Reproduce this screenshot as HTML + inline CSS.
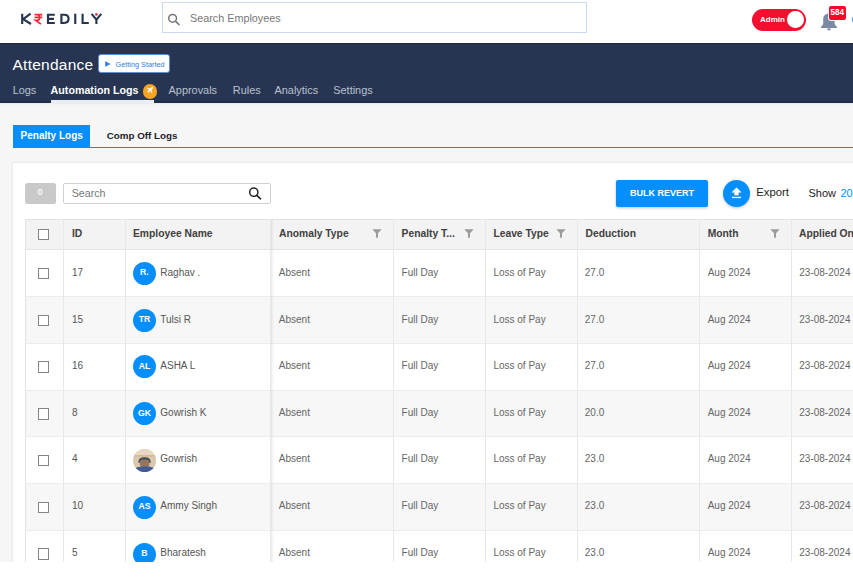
<!DOCTYPE html>
<html><head><meta charset="utf-8"><title>Kredily Attendance</title>
<style>
*{margin:0;padding:0;box-sizing:border-box;}
html,body{width:853px;height:583px;overflow:hidden;background:#fff;font-family:"Liberation Sans",sans-serif;}
.a{position:absolute;white-space:nowrap;line-height:1;}
</style></head>
<body>
<svg class="a" style="left:0;top:0" width="120" height="40" viewBox="0 0 120 40">
<g stroke="#283552" stroke-width="2.15" fill="none" stroke-linejoin="miter">
<path d="M22.2 13.7 V24 M30.6 13.7 L23.2 19.2 L31 24"/>
<path d="M54.8 14.75 H48 V22.95 H54.8 M48 18.85 H54"/>
<path d="M61.4 14.75 V22.95 H64.3 C67.4 22.95 68.55 21 68.55 18.85 C68.55 16.7 67.4 14.75 64.3 14.75 Z"/>
<path d="M75.25 13.7 V24"/>
<path d="M82.6 13.7 V22.95 H88.8"/>
<path d="M91.6 13.9 L96.4 19.6 L101.3 13.9 M96.4 19.2 V24"/>
</g>
<g stroke="#ee2a3a" stroke-width="1.7" fill="none">
<path d="M34.5 14.6 H42.3 M34.5 17.4 H42.3 M35 14.6 H37.2 C40.4 14.6 40.4 20.3 37.2 20.3 H35.6 L40.9 24.1"/>
</g>
<circle cx="96.4" cy="14.4" r="1.3" fill="#ee2a3a"/>
</svg>
<div class="a" style="left:162px;top:2px;width:425px;height:30.8px;border:1px solid #c9dcef;background:#fff;"></div>
<svg class="a" style="left:167px;top:13px" width="14" height="13" viewBox="0 0 14 13">
<circle cx="5.6" cy="5.3" r="3.9" stroke="#777" stroke-width="1.5" fill="none"/>
<path d="M8.4 8.1 L12 11.6" stroke="#777" stroke-width="1.6" stroke-linecap="round"/>
</svg>
<div class="a" style="left:190px;top:12.79px;font-size:10.8px;color:#777;">Search Employees</div>
<div class="a" style="left:752px;top:9px;width:54px;height:22px;border-radius:11px;background:#f50f2e;"></div>
<div class="a" style="left:787.2px;top:11.3px;width:16.6px;height:16.6px;border-radius:50%;background:#fff;"></div>
<div class="a" style="left:760px;top:16.16px;font-size:8px;font-weight:bold;color:#fff;">Admin</div>
<svg class="a" style="left:819px;top:12px" width="20" height="20" viewBox="0 0 20 20">
<path d="M10 1.6 C6.4 1.6 4.2 4 4.2 7.6 V12.3 L2 15 V16 H18 V15 L15.6 12.3 V7.6 C15.6 4 13.6 1.6 10 1.6Z" fill="#7b8aa3"/>
<path d="M8 16.6 H12 C12 17.9 11.2 18.6 10 18.6 C8.8 18.6 8 17.9 8 16.6Z" fill="#7b8aa3"/>
</svg>
<div class="a" style="left:828.5px;top:6px;width:17.8px;height:13.9px;border-radius:2px;background:#f50a25;box-shadow:0 0 0 1px #fff;"></div>
<div class="a" style="left:830.4px;top:9.13px;font-size:8.2px;font-weight:bold;color:#fff;">584</div>
<div class="a" style="left:852.3px;top:15.8px;width:8px;height:7.4px;border-radius:3px;background:#4aa3f0;"></div>
<div class="a" style="left:0;top:43px;width:853px;height:59.5px;background:#283552;border-top:1px solid #1d2740;"></div>
<div class="a" style="left:12.5px;top:57px;font-size:15.5px;letter-spacing:0.25px;color:#fff;">Attendance</div>
<div class="a" style="left:98px;top:54.3px;width:72px;height:19px;border-radius:3px;background:#fff;border:1px solid #5b8fd8;"></div>
<svg class="a" style="left:104px;top:60px" width="8" height="8" viewBox="0 0 8 8"><path d="M1.2 1.2 L6.6 4 L1.2 6.8Z" fill="#2f7de1"/></svg>
<div class="a" style="left:115.5px;top:60.75px;font-size:7.3px;color:#2f7de1;">Getting Started</div>
<div class="a" style="left:12.7px;top:84.88px;font-size:10.9px;color:#b9c1d0;">Logs</div>
<div class="a" style="left:50.6px;top:84.90px;font-size:10.7px;font-weight:bold;color:#fff;">Automation Logs</div>
<div class="a" style="left:143px;top:84.3px;width:14.3px;height:14.4px;border-radius:50%;background:#f7a520;"></div>
<svg class="a" style="left:146.3px;top:86.2px" width="8" height="8" viewBox="0 0 10 10">
<path d="M8.6 1.4 C8.1 0.9 7.4 1.1 6.9 1.6 L5.4 3.1 L1.7 2.2 L1 2.9 L4 4.6 L2.7 6 L1.6 5.8 L1.1 6.3 L2.5 7.5 L3.7 8.9 L4.2 8.4 L4 7.3 L5.4 6 L7.1 9 L7.8 8.3 L6.9 4.6 L8.4 3.1 C8.9 2.6 9.1 1.9 8.6 1.4Z" fill="#fff"/>
</svg>
<div class="a" style="left:168.6px;top:84.88px;font-size:10.9px;color:#b9c1d0;">Approvals</div>
<div class="a" style="left:232.8px;top:84.88px;font-size:10.9px;color:#b9c1d0;">Rules</div>
<div class="a" style="left:274.5px;top:84.88px;font-size:10.9px;color:#b9c1d0;">Analytics</div>
<div class="a" style="left:333.3px;top:84.88px;font-size:10.9px;color:#b9c1d0;">Settings</div>
<div class="a" style="left:0;top:101px;width:853px;height:1.5px;background:#222d49;"></div>
<div class="a" style="left:50.6px;top:100px;width:103.5px;height:2.5px;background:#e9eef5;"></div>
<div class="a" style="left:0;top:102.5px;width:853px;height:459.5px;background:#f6f6f6;"></div>
<div class="a" style="left:0;top:102.5px;width:853px;height:2px;background:linear-gradient(#e8e8e8,#f6f6f6);"></div>
<div class="a" style="left:13px;top:125px;width:77.3px;height:22.6px;background:#058ffd;"></div>
<div class="a" style="left:20.6px;top:130.50px;font-size:10px;font-weight:bold;color:#fff;">Penalty Logs</div>
<div class="a" style="left:106.7px;top:130.52px;font-size:9.8px;font-weight:bold;color:#1d1d2b;">Comp Off Logs</div>
<div class="a" style="left:13px;top:147px;width:840px;height:1.3px;background:#058ffd;"></div>
<div class="a" style="left:12px;top:162px;width:860px;height:420px;background:#fff;border:1px solid #ebebeb;box-shadow:0 0 2px rgba(0,0,0,0.05);"></div>
<div class="a" style="left:25.2px;top:183.3px;width:30.5px;height:20.7px;border-radius:2.5px;background:#c9c9c9;"></div>
<div class="a" style="left:37.6px;top:188.10px;font-size:9.2px;font-weight:bold;color:#fafafa;">0</div>
<div class="a" style="left:63.4px;top:183.4px;width:207.2px;height:20.6px;border-radius:2px;border:1px solid #d0d0d0;background:#fff;"></div>
<div class="a" style="left:71.7px;top:187.60px;font-size:10.7px;color:#777;">Search</div>
<svg class="a" style="left:247px;top:186px" width="16" height="15" viewBox="0 0 16 15">
<circle cx="6.8" cy="6.2" r="4.1" stroke="#222" stroke-width="1.5" fill="none"/>
<path d="M9.8 9.3 L13.6 12.8" stroke="#222" stroke-width="1.6" stroke-linecap="round"/>
</svg>
<div class="a" style="left:616px;top:180px;width:92px;height:27px;border-radius:2px;background:#058ffd;box-shadow:0 1px 3px rgba(0,0,0,0.25);"></div>
<div class="a" style="left:630px;top:188.63px;font-size:9px;font-weight:bold;color:#fff;">BULK REVERT</div>
<div class="a" style="left:723px;top:180px;width:27px;height:27px;border-radius:50%;background:#058ffd;box-shadow:0 1px 3px rgba(0,0,0,0.25);"></div>
<svg class="a" style="left:729px;top:186px" width="15" height="15" viewBox="0 0 15 15">
<path d="M7.5 1.5 L12.6 6.6 H9.6 V9.2 H5.4 V6.6 H2.4Z" fill="#fff"/>
<rect x="3" y="10.8" width="9" height="1.3" fill="#fff"/>
</svg>
<div class="a" style="left:756.3px;top:186.83px;font-size:11.3px;color:#222;">Export</div>
<div class="a" style="left:808.5px;top:187.56px;font-size:11px;color:#222;">Show</div>
<div class="a" style="left:840.4px;top:187.56px;font-size:11px;color:#058ffd;">20</div>
<div class="a" style="left:25px;top:219px;width:838px;height:364px;border:1px solid #e3e3e3;background:#fff;"></div>
<div class="a" style="left:25px;top:219px;width:838px;height:31px;background:#f3f3f3;border:1px solid #e3e3e3;"></div>
<div class="a" style="left:26px;top:250.20px;width:828px;height:46.80px;background:#fff;border-bottom:1px solid #ececec;"></div>
<div class="a" style="left:26px;top:297.00px;width:828px;height:46.80px;background:#f7f7f7;border-bottom:1px solid #ececec;"></div>
<div class="a" style="left:26px;top:343.80px;width:828px;height:46.80px;background:#fff;border-bottom:1px solid #ececec;"></div>
<div class="a" style="left:26px;top:390.60px;width:828px;height:46.80px;background:#f7f7f7;border-bottom:1px solid #ececec;"></div>
<div class="a" style="left:26px;top:437.40px;width:828px;height:46.80px;background:#fff;border-bottom:1px solid #ececec;"></div>
<div class="a" style="left:26px;top:484.20px;width:828px;height:46.80px;background:#f7f7f7;border-bottom:1px solid #ececec;"></div>
<div class="a" style="left:26px;top:531.00px;width:828px;height:46.80px;background:#fff;border-bottom:1px solid #ececec;"></div>
<div class="a" style="left:62.8px;top:219px;width:1px;height:343px;background:#e8e8e8;"></div>
<div class="a" style="left:124.7px;top:219px;width:1px;height:343px;background:#e8e8e8;"></div>
<div class="a" style="left:269.7px;top:219px;width:1px;height:343px;background:#e8e8e8;"></div>
<div class="a" style="left:393.0px;top:219px;width:1px;height:343px;background:#e8e8e8;"></div>
<div class="a" style="left:484.9px;top:219px;width:1px;height:343px;background:#e8e8e8;"></div>
<div class="a" style="left:576.7px;top:219px;width:1px;height:343px;background:#e8e8e8;"></div>
<div class="a" style="left:698.9px;top:219px;width:1px;height:343px;background:#e8e8e8;"></div>
<div class="a" style="left:791.1px;top:219px;width:1px;height:343px;background:#e8e8e8;"></div>
<div class="a" style="left:270.7px;top:220px;width:3px;height:343px;background:linear-gradient(to right,rgba(0,0,0,0.08),rgba(0,0,0,0));"></div>
<div class="a" style="left:37.5px;top:228.80px;width:11.4px;height:11.4px;border:1.8px solid #858585;background:#fff;"></div>
<div class="a" style="left:72px;top:228.66px;font-size:10.3px;font-weight:bold;color:#404040;">ID</div>
<div class="a" style="left:133px;top:228.66px;font-size:10.3px;font-weight:bold;color:#404040;">Employee Name</div>
<div class="a" style="left:279px;top:228.66px;font-size:10.3px;font-weight:bold;color:#404040;">Anomaly Type</div>
<div class="a" style="left:401.6px;top:228.66px;font-size:10.3px;font-weight:bold;color:#404040;">Penalty T...</div>
<div class="a" style="left:493.4px;top:228.66px;font-size:10.3px;font-weight:bold;color:#404040;">Leave Type</div>
<div class="a" style="left:585.6px;top:228.66px;font-size:10.3px;font-weight:bold;color:#404040;">Deduction</div>
<div class="a" style="left:707.7px;top:228.66px;font-size:10.3px;font-weight:bold;color:#404040;">Month</div>
<div class="a" style="left:799px;top:228.66px;font-size:10.3px;font-weight:bold;color:#404040;">Applied On</div>
<svg class="a" style="left:372.3px;top:229px" width="10" height="9" viewBox="0 0 10 9"><path d="M0.3 0.3 H9.7 L6 4.2 V8.7 L4 8.7 V4.2Z" fill="#9b9b9b"/></svg>
<svg class="a" style="left:464.3px;top:229px" width="10" height="9" viewBox="0 0 10 9"><path d="M0.3 0.3 H9.7 L6 4.2 V8.7 L4 8.7 V4.2Z" fill="#9b9b9b"/></svg>
<svg class="a" style="left:556px;top:229px" width="10" height="9" viewBox="0 0 10 9"><path d="M0.3 0.3 H9.7 L6 4.2 V8.7 L4 8.7 V4.2Z" fill="#9b9b9b"/></svg>
<svg class="a" style="left:770.3px;top:229px" width="10" height="9" viewBox="0 0 10 9"><path d="M0.3 0.3 H9.7 L6 4.2 V8.7 L4 8.7 V4.2Z" fill="#9b9b9b"/></svg>
<div class="a" style="left:37.5px;top:268.00px;width:11.4px;height:11.4px;border:1.8px solid #858585;background:#fff;"></div>
<div class="a" style="left:72px;top:268.00px;font-size:10px;color:#555;">17</div>
<div class="a" style="left:132.8px;top:261.70px;width:23.2px;height:23.2px;border-radius:50%;background:#058ffd;"></div>
<div class="a" style="left:132.8px;top:268.40px;width:23.3px;text-align:center;font-size:8.7px;font-weight:bold;color:#fff;">R.</div>
<div class="a" style="left:160.3px;top:268.00px;font-size:10px;color:#555;">Raghav .</div>
<div class="a" style="left:278.8px;top:268.00px;font-size:10px;color:#666;">Absent</div>
<div class="a" style="left:401.6px;top:268.00px;font-size:10px;color:#666;">Full Day</div>
<div class="a" style="left:493.4px;top:268.00px;font-size:10px;color:#666;">Loss of Pay</div>
<div class="a" style="left:584.8px;top:268.00px;font-size:10px;color:#666;">27.0</div>
<div class="a" style="left:707.7px;top:268.00px;font-size:10px;color:#666;">Aug 2024</div>
<div class="a" style="left:799.3px;top:268.00px;font-size:10px;color:#666;">23-08-2024</div>
<div class="a" style="left:37.5px;top:314.72px;width:11.4px;height:11.4px;border:1.8px solid #858585;background:#fff;"></div>
<div class="a" style="left:72px;top:314.60px;font-size:10px;color:#555;">15</div>
<div class="a" style="left:132.8px;top:308.50px;width:23.2px;height:23.2px;border-radius:50%;background:#058ffd;"></div>
<div class="a" style="left:132.8px;top:315.20px;width:23.3px;text-align:center;font-size:8.7px;font-weight:bold;color:#fff;">TR</div>
<div class="a" style="left:160.3px;top:314.60px;font-size:10px;color:#555;">Tulsi R</div>
<div class="a" style="left:278.8px;top:314.60px;font-size:10px;color:#666;">Absent</div>
<div class="a" style="left:401.6px;top:314.60px;font-size:10px;color:#666;">Full Day</div>
<div class="a" style="left:493.4px;top:314.60px;font-size:10px;color:#666;">Loss of Pay</div>
<div class="a" style="left:584.8px;top:314.60px;font-size:10px;color:#666;">27.0</div>
<div class="a" style="left:707.7px;top:314.60px;font-size:10px;color:#666;">Aug 2024</div>
<div class="a" style="left:799.3px;top:314.60px;font-size:10px;color:#666;">23-08-2024</div>
<div class="a" style="left:37.5px;top:361.44px;width:11.4px;height:11.4px;border:1.8px solid #858585;background:#fff;"></div>
<div class="a" style="left:72px;top:361.20px;font-size:10px;color:#555;">16</div>
<div class="a" style="left:132.8px;top:355.30px;width:23.2px;height:23.2px;border-radius:50%;background:#058ffd;"></div>
<div class="a" style="left:132.8px;top:362.00px;width:23.3px;text-align:center;font-size:8.7px;font-weight:bold;color:#fff;">AL</div>
<div class="a" style="left:160.3px;top:361.20px;font-size:10px;color:#555;">ASHA L</div>
<div class="a" style="left:278.8px;top:361.20px;font-size:10px;color:#666;">Absent</div>
<div class="a" style="left:401.6px;top:361.20px;font-size:10px;color:#666;">Full Day</div>
<div class="a" style="left:493.4px;top:361.20px;font-size:10px;color:#666;">Loss of Pay</div>
<div class="a" style="left:584.8px;top:361.20px;font-size:10px;color:#666;">27.0</div>
<div class="a" style="left:707.7px;top:361.20px;font-size:10px;color:#666;">Aug 2024</div>
<div class="a" style="left:799.3px;top:361.20px;font-size:10px;color:#666;">23-08-2024</div>
<div class="a" style="left:37.5px;top:408.16px;width:11.4px;height:11.4px;border:1.8px solid #858585;background:#fff;"></div>
<div class="a" style="left:72px;top:407.80px;font-size:10px;color:#555;">8</div>
<div class="a" style="left:132.8px;top:402.10px;width:23.2px;height:23.2px;border-radius:50%;background:#058ffd;"></div>
<div class="a" style="left:132.8px;top:408.80px;width:23.3px;text-align:center;font-size:8.7px;font-weight:bold;color:#fff;">GK</div>
<div class="a" style="left:160.3px;top:407.80px;font-size:10px;color:#555;">Gowrish K</div>
<div class="a" style="left:278.8px;top:407.80px;font-size:10px;color:#666;">Absent</div>
<div class="a" style="left:401.6px;top:407.80px;font-size:10px;color:#666;">Full Day</div>
<div class="a" style="left:493.4px;top:407.80px;font-size:10px;color:#666;">Loss of Pay</div>
<div class="a" style="left:584.8px;top:407.80px;font-size:10px;color:#666;">20.0</div>
<div class="a" style="left:707.7px;top:407.80px;font-size:10px;color:#666;">Aug 2024</div>
<div class="a" style="left:799.3px;top:407.80px;font-size:10px;color:#666;">23-08-2024</div>
<div class="a" style="left:37.5px;top:454.88px;width:11.4px;height:11.4px;border:1.8px solid #858585;background:#fff;"></div>
<div class="a" style="left:72px;top:454.40px;font-size:10px;color:#555;">4</div>
<svg class="a" style="left:132.8px;top:448.70px" width="23.2" height="23.2" viewBox="0 0 24 24">
<defs><clipPath id="cp"><circle cx="12" cy="12" r="12"/></clipPath></defs>
<g clip-path="url(#cp)">
<rect width="24" height="24" fill="#dcc8ac"/>
<rect y="0" width="24" height="6.5" fill="#e8d8c2"/>
<rect y="6.5" width="24" height="1.2" fill="#cbb597"/>
<ellipse cx="12" cy="15.5" rx="5" ry="4.6" fill="#957560"/>
<path d="M5.6 14.2 C5.6 9.6 8.5 8.6 12 8.6 C15.5 8.6 18.4 9.6 18.4 14.2 L16.8 14.2 C16.5 11.5 14.5 11 12 11 C9.5 11 7.5 11.5 7.2 14.2Z" fill="#4a4c55"/>
<path d="M0 24 C1 18.6 6 18.2 12 18.2 C18 18.2 23 18.6 24 24Z" fill="#3f5d93"/>
</g></svg>
<div class="a" style="left:160.3px;top:454.40px;font-size:10px;color:#555;">Gowrish</div>
<div class="a" style="left:278.8px;top:454.40px;font-size:10px;color:#666;">Absent</div>
<div class="a" style="left:401.6px;top:454.40px;font-size:10px;color:#666;">Full Day</div>
<div class="a" style="left:493.4px;top:454.40px;font-size:10px;color:#666;">Loss of Pay</div>
<div class="a" style="left:584.8px;top:454.40px;font-size:10px;color:#666;">23.0</div>
<div class="a" style="left:707.7px;top:454.40px;font-size:10px;color:#666;">Aug 2024</div>
<div class="a" style="left:799.3px;top:454.40px;font-size:10px;color:#666;">23-08-2024</div>
<div class="a" style="left:37.5px;top:501.60px;width:11.4px;height:11.4px;border:1.8px solid #858585;background:#fff;"></div>
<div class="a" style="left:72px;top:501.00px;font-size:10px;color:#555;">10</div>
<div class="a" style="left:132.8px;top:495.70px;width:23.2px;height:23.2px;border-radius:50%;background:#058ffd;"></div>
<div class="a" style="left:132.8px;top:502.40px;width:23.3px;text-align:center;font-size:8.7px;font-weight:bold;color:#fff;">AS</div>
<div class="a" style="left:160.3px;top:501.00px;font-size:10px;color:#555;">Ammy Singh</div>
<div class="a" style="left:278.8px;top:501.00px;font-size:10px;color:#666;">Absent</div>
<div class="a" style="left:401.6px;top:501.00px;font-size:10px;color:#666;">Full Day</div>
<div class="a" style="left:493.4px;top:501.00px;font-size:10px;color:#666;">Loss of Pay</div>
<div class="a" style="left:584.8px;top:501.00px;font-size:10px;color:#666;">23.0</div>
<div class="a" style="left:707.7px;top:501.00px;font-size:10px;color:#666;">Aug 2024</div>
<div class="a" style="left:799.3px;top:501.00px;font-size:10px;color:#666;">23-08-2024</div>
<div class="a" style="left:37.5px;top:548.32px;width:11.4px;height:11.4px;border:1.8px solid #858585;background:#fff;"></div>
<div class="a" style="left:72px;top:547.60px;font-size:10px;color:#555;">5</div>
<div class="a" style="left:132.8px;top:542.50px;width:23.2px;height:23.2px;border-radius:50%;background:#058ffd;"></div>
<div class="a" style="left:132.8px;top:549.20px;width:23.3px;text-align:center;font-size:8.7px;font-weight:bold;color:#fff;">B</div>
<div class="a" style="left:160.3px;top:547.60px;font-size:10px;color:#555;">Bharatesh</div>
<div class="a" style="left:278.8px;top:547.60px;font-size:10px;color:#666;">Absent</div>
<div class="a" style="left:401.6px;top:547.60px;font-size:10px;color:#666;">Full Day</div>
<div class="a" style="left:493.4px;top:547.60px;font-size:10px;color:#666;">Loss of Pay</div>
<div class="a" style="left:584.8px;top:547.60px;font-size:10px;color:#666;">23.0</div>
<div class="a" style="left:707.7px;top:547.60px;font-size:10px;color:#666;">Aug 2024</div>
<div class="a" style="left:799.3px;top:547.60px;font-size:10px;color:#666;">23-08-2024</div>
<div class="a" style="left:0;top:562px;width:853px;height:21px;background:#fff;"></div>
</body></html>
